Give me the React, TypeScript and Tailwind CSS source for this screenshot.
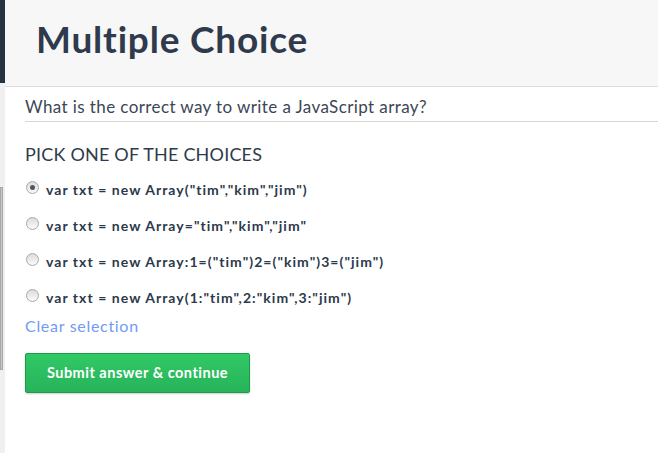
const choices = [
  'var txt = new Array("tim","kim","jim")',
  'var txt = new Array="tim","kim","jim"',
  'var txt = new Array:1=("tim")2=("kim")3=("jim")',
  'var txt = new Array(1:"tim",2:"kim",3:"jim")',
];

function Radio({ checked }: { checked: boolean }) {
  return (
    <span className="relative mt-[-5px] flex h-[13px] w-[13px] shrink-0 items-center justify-center rounded-full border border-[#a9a9a9] bg-gradient-to-b from-[#dcdcdc] to-[#fafafa]">
      {checked && <span className="h-[5px] w-[5px] rounded-full bg-[#555]" />}
    </span>
  );
}

export default function App() {
  return (
    <div className="flex h-[453px] w-[658px] overflow-hidden bg-white font-['Lato',sans-serif] text-[#34495e]">
      {/* Left edge */}
      <div className="flex w-[5px] shrink-0 flex-col bg-[#f0f0f0]">
        <div className="h-[83px] bg-[#263142]" />
        <div className="mt-[104px] h-[183px] w-[3px] border border-[#a8a8a8] bg-[#c8c8c8]" />
      </div>

      <div className="flex-1">
        {/* Header */}
        <div className="h-[87px] border-b border-[#dcdcdc] bg-[#f7f7f7] pl-[31px] pt-[15px]">
          <h1 className="text-[37px] font-bold leading-[48px] tracking-[0.8px] text-[#2f3b4c]">Multiple Choice</h1>
        </div>

        <div className="pl-[20px]">
          <p className="border-b border-[#d6d6d6] pb-[3px] pt-[9px] text-[17px] leading-[22px] tracking-[0.4px] text-[#3c4656]">
            What is the correct way to write a JavaScript array?
          </p>

          <h2 className="mt-[20px] text-[18px] leading-[24px] tracking-[0.2px] text-[#2f3b4c]">PICK ONE OF THE CHOICES</h2>

          <div className="mt-[15px] flex flex-col gap-[18px]">
            {choices.map((c, i) => (
              <label key={i} className="flex h-[18px] items-center gap-[7px] pl-[1px]">
                <Radio checked={i === 0} />
                <span className="whitespace-nowrap text-[14px] font-bold leading-[18px] tracking-[1.05px] text-[#2c3a4b]">{c}</span>
              </label>
            ))}
          </div>

          <a className="mt-[8px] block text-[16px] leading-[22px] tracking-[0.7px] text-[#6f9cf5]">Clear selection</a>

          <button className="mt-[16px] flex h-[40px] w-[225px] items-center justify-center rounded-[2px] border border-[#1e9b49] bg-gradient-to-b from-[#31c966] to-[#27b35a] text-[14.5px] font-bold tracking-[0.5px] text-white shadow-[0_1px_2px_rgba(0,0,0,0.2)]">
            Submit answer &amp; continue
          </button>
        </div>
      </div>
    </div>
  );
}
